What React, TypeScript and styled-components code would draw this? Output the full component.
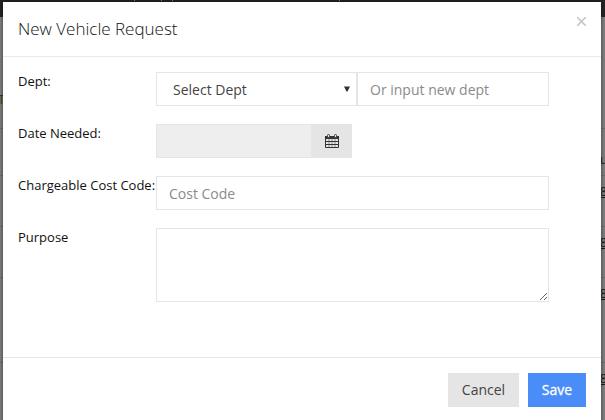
import React from "react";
import styled, { createGlobalStyle } from "styled-components";

const GlobalStyle = createGlobalStyle`
  * { box-sizing: border-box; }
  html, body { margin: 0; padding: 0; overflow: hidden; }
  body, input, select, textarea, button { font-family: "Open Sans", sans-serif; }
`;

const Page = styled.div`
  position: relative;
  width: 605px;
  height: 420px;
  overflow: hidden;
  background: #808080;
`;

const NavBar = styled.div`
  display: flex;
  gap: 24px;
  height: 17px;
  padding-left: 134px;
  background: #262425;
`;

const NavMark = styled.i<{ $gap?: number }>`
  width: 1px;
  height: 1px;
  margin-left: ${(p) => p.$gap ?? 0}px;
  background: #888;
`;

const RowLine = styled.div<{ $top: number; $dark?: boolean }>`
  position: absolute;
  top: ${(p) => p.$top}px;
  left: 0;
  width: ${(p) => (p.$dark ? "3px" : "100%")};
  height: 1px;
  background: ${(p) => (p.$dark ? "#222" : "#6e6e6e")};
`;

const CellText = styled.span<{ $top: number; $left: number; $color?: string }>`
  position: absolute;
  top: ${(p) => p.$top}px;
  left: ${(p) => p.$left}px;
  font-size: 12px;
  line-height: 14px;
  text-decoration: ${(p) => (p.$color ? "none" : "underline")};
  color: ${(p) => p.$color ?? "#1b1b22"};
`;

const Modal = styled.div`
  position: absolute;
  top: 2px;
  left: 3px;
  display: flex;
  flex-direction: column;
  width: 598px;
  height: 430px;
  background: #fff;
  box-shadow: 0 0 4px rgba(0, 0, 0, 0.6);
`;

const Header = styled.header`
  display: flex;
  justify-content: space-between;
  height: 55px;
  padding: 15px;
  border-bottom: 1px solid #eaeaea;
`;

const Title = styled.h4`
  margin: 0;
  font-size: 17px;
  font-weight: 300;
  line-height: 24px;
  color: #111;
`;

const CloseButton = styled.button`
  width: 9px;
  height: 9px;
  margin: 0;
  padding: 0;
  border: 0;
  background: none;
  svg { display: block; }
`;

const Body = styled.div`
  display: flex;
  flex-direction: column;
  gap: 18px;
  height: 300px;
  padding: 15px;
`;

const FormRow = styled.div`
  display: flex;
  align-items: flex-start;
`;

const Label = styled.label`
  width: 138px;
  font-size: 13px;
  line-height: 18px;
  white-space: nowrap;
  color: #111;
`;

const Field = styled.input<{ $width: number }>`
  width: ${(p) => p.$width}px;
  height: 34px;
  padding: 6px 12px;
  border: 1px solid #e5e5e5;
  border-radius: 0;
  outline: 0;
  font-size: 14px;
  color: #333;
  background: #fff;
  &::placeholder { color: #8a8a8a; opacity: 1; }
  &:disabled { background: #eee; }
`;

const SelectBox = styled.div`
  display: flex;
  align-items: center;
  justify-content: space-between;
  width: 201px;
  height: 34px;
  padding: 0 6px 0 16px;
  border: 1px solid #e5e5e5;
  font-size: 14px;
  color: #444;
  background: #fff;
  svg { margin-top: -1px; }
`;

const Addon = styled.span`
  display: flex;
  align-items: center;
  justify-content: center;
  width: 40px;
  height: 34px;
  background: #e5e5e5;
  svg { margin-left: -1px; }
`;

const TextArea = styled.textarea`
  display: block;
  width: 393px;
  height: 74px;
  padding: 6px 12px;
  border: 1px solid #e5e5e5;
  border-radius: 0;
  outline: 0;
  resize: vertical;
  font-size: 14px;
`;

const Footer = styled.footer`
  display: flex;
  justify-content: flex-end;
  gap: 9px;
  padding: 15px;
  border-top: 1px solid #e5e5e5;
`;

const Button = styled.button<{ $primary?: boolean }>`
  width: ${(p) => (p.$primary ? 58 : 71)}px;
  height: 34px;
  padding: 0 0 2px;
  border: 0;
  font-size: 14px;
  color: ${(p) => (p.$primary ? "#fff" : "#444")};
  -webkit-text-stroke: ${(p) => (p.$primary ? "0.3px #fff" : "0")};
  background: ${(p) => (p.$primary ? "#4b8df8" : "#e5e5e5")};
`;

const CalendarIcon = () => (
  <svg width="14" height="14" viewBox="0 0 14 14" fill="none" stroke="#333">
    <path d="M0.5 2.5h13v11h-13z" />
    <path d="M0 3.5h14" strokeWidth="3" />
    <path d="M0.5 7.5h13M0.5 10.5h13" />
    <path d="M4 5v8M7 5v8M10 5v8" strokeOpacity=".45" />
    <path
      d="M2.5 3.5V1q0-.5.5-.5h1q.5 0 .5.5v2.5zM9.5 3.5V1q0-.5.5-.5h1q.5 0 .5.5v2.5z"
      fill="#e5e5e5"
      strokeOpacity=".7"
    />
  </svg>
);

export default function App() {
  return (
    <>
      <GlobalStyle />
      <Page>
        <NavBar>
          <NavMark />
          <NavMark $gap={2} />
          <NavMark $gap={-14} />
          <NavMark $gap={142} />
        </NavBar>
        <RowLine $top={95} $dark />
        {[128, 175, 226, 277, 362].map((y) => (
          <RowLine key={y} $top={y} />
        ))}
        <CellText $top={93} $left={-2} $color="#3c3a10">T</CellText>
        <CellText $top={153} $left={600} $color="#1b1b22">u</CellText>
        {[185, 236, 287, 372].map((y) => (
          <CellText key={y} $top={y} $left={600}>8</CellText>
        ))}
        <Modal role="dialog">
          <Header>
            <Title>New Vehicle Request</Title>
            <CloseButton aria-label="Close">
              <svg width="9" height="9" viewBox="0 0 9 9" stroke="#c2c2c2" strokeWidth="1.5">
                <path d="M.2.2l8.6 8.6M8.8.2L.2 8.8" />
              </svg>
            </CloseButton>
          </Header>
          <Body>
            <FormRow>
              <Label>Dept:</Label>
              <SelectBox>
                Select Dept
                <svg width="6" height="6" viewBox="0 0 6 6" fill="#333">
                  <path d="M0 .5h6L3.5 5.5h-1z" />
                </svg>
              </SelectBox>
              <Field $width={192} placeholder="Or input new dept" />
            </FormRow>
            <FormRow>
              <Label>Date Needed:</Label>
              <Field $width={156} disabled />
              <Addon><CalendarIcon /></Addon>
            </FormRow>
            <FormRow>
              <Label>Chargeable Cost Code:</Label>
              <Field $width={393} placeholder="Cost Code" />
            </FormRow>
            <FormRow>
              <Label>Purpose</Label>
              <TextArea />
            </FormRow>
          </Body>
          <Footer>
            <Button>Cancel</Button>
            <Button $primary>Save</Button>
          </Footer>
        </Modal>
      </Page>
    </>
  );
}
